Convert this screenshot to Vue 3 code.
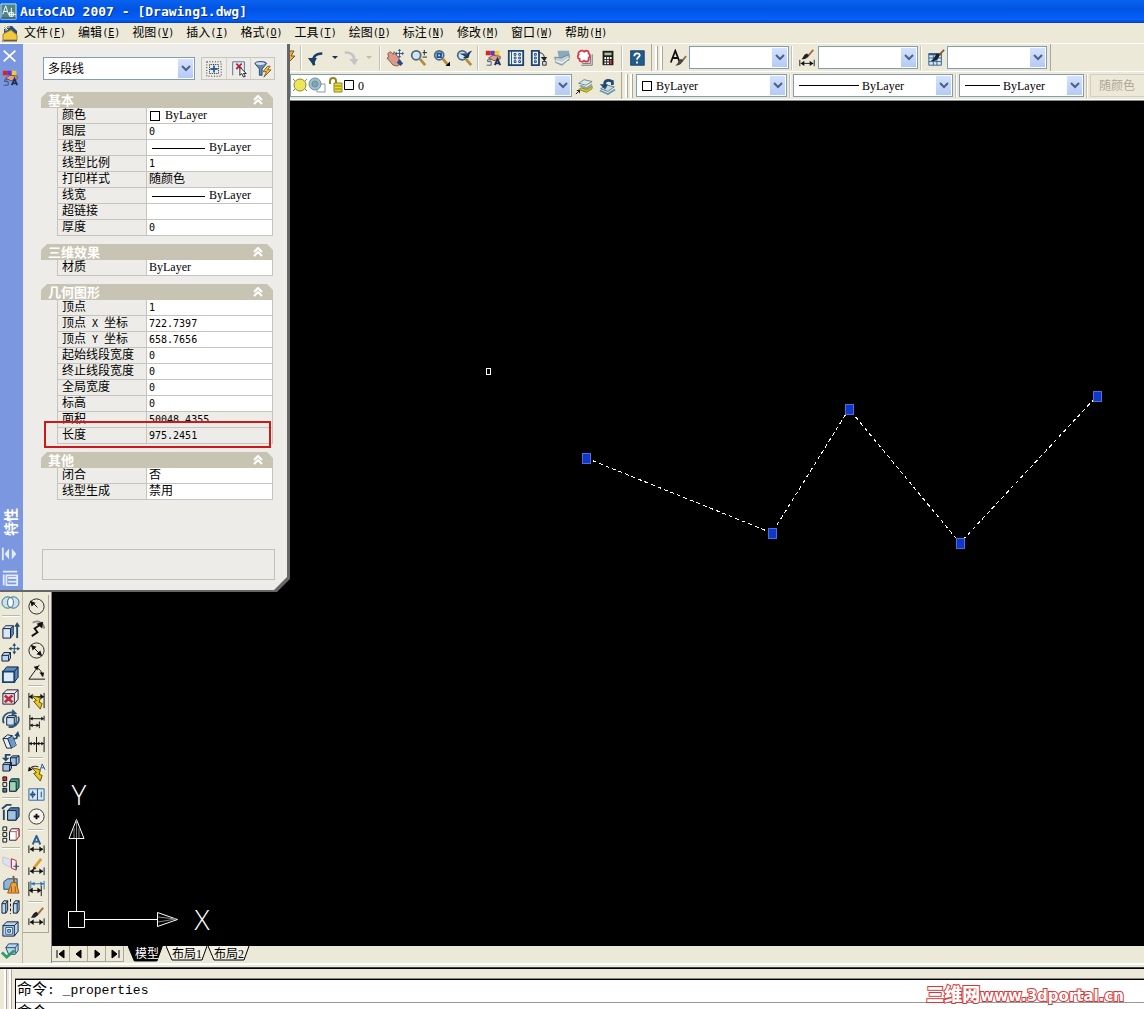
<script setup>
const menus = [
  ['文件', 'F'], ['编辑', 'E'], ['视图', 'V'], ['插入', 'I'], ['格式', 'O'], ['工具', 'T'],
  ['绘图', 'D'], ['标注', 'N'], ['修改', 'M'], ['窗口', 'W'], ['帮助', 'H'],
]

const lens = '<circle cx="8" cy="7" r="5" fill="#cfe6f5" stroke="#51697e" stroke-width="2"/><path d="M12 11l6 7" stroke="#b58a3c" stroke-width="3"/>'
const cube = '<path d="M2 7l4-4h12v10l-4 5H2z" fill="#b9d7f0" stroke="#111c33"/><path d="M2 7h12v11M14 7l4-4" fill="none" stroke="#111c33"/>'
const hdim = '<path d="M2 11v8M18 11v8M3 15h14" stroke="#111" fill="none"/><path d="M3 15l4-3v6zM17 15l-4-3v6z" fill="#111"/>'
const bolt = '<path d="M5 5l9 2-1 5 3 1-2 6-7-8 3-1z" fill="#e8c818" stroke="#5c4d10"/>'
const brush = '<path d="M17 1l-7 8" stroke="#a3683a" stroke-width="2"/><path d="M12 7c-2 4-5 5-8 4 2-1 2-5 6-6z" fill="#222"/>'
const props = '<path d="M2 2h5v5H2z" fill="#d22"/><path d="M7 2h5v5H7z" fill="#63c"/><path d="M12 2h5v5h-5z" fill="#e8d02c"/><path d="M5 10l5-3 8 1v3l-7 2z" fill="#dba58b" stroke="#844"/><path d="M12 18l3-7 3 7M13 16h4" fill="none" stroke="#1d315c" stroke-width="2"/><path d="M8 12H4v2h4v4H3" fill="none" stroke="#357" />'

const icons = {
  bolt: '<path d="M8 3L3 11h4l-4 7 10-10H9l3-5z" fill="#f2b63c" stroke="#6d5520"/>',
  undo: '<path d="M8 18c-3-7 0-13 9-13" fill="none" stroke="#1c3f63" stroke-width="3"/><path d="M1 10h10l-4 8z" fill="#1c3f63"/>',
  redo: '<path d="M2 4c8-1 11 4 10 9" fill="none" stroke="#c3c5c4" stroke-width="3"/><path d="M7 11h10l-4 7z" fill="#c3c5c4"/>',
  pan: '<path d="M2 5l3-2 3 3 1-3 5 7 2 6-3 3-5-1-7-8 2-1z" fill="#d99a8c" stroke="#8a5348"/><path d="M12 15l4 4 3-3-4-5z" fill="#2b4c83"/><path d="M15 1v8M11 5h8" stroke="#2b5487" stroke-width="1"/><path d="M15 0l-2 2h4zM15 10l-2-2h4zM10 5l2-2v4zM20 5l-2-2v4z" fill="#2b5487"/>',
  zoom: lens + '<path d="M15 4h5M17 1v6M15 9h5" stroke="#222" fill="none"/>',
  zoomwin: lens + '<path d="M6 5h4v4H6z" fill="none" stroke="#1c4c94" stroke-width="2"/><path d="M20 14v5h-5z" fill="#000"/>',
  zoomprev: lens + '<path d="M5 5h7v3c2-4 3-5 7-6-3 3-3 5-4 8H9l2-2z" fill="#17385f"/>',
  props,
  center: '<path d="M2 2h16v16H2z" fill="#e6f1fa" stroke="#1c4370" stroke-width="2"/><path d="M5 2v16" stroke="#1c4370"/><path d="M8 5h2v2H8zM13 5h2v2h-2zM8 9h2v2H8zM13 9h2v2h-2zM8 13h2v2H8zM13 13h2v2h-2z" fill="none" stroke="#1c4370"/>',
  palettes: '<path d="M2 2h8v16H2z" fill="#e6f1fa" stroke="#1c4370" stroke-width="2"/><path d="M5 5h2v2H5zM5 9h2v2H5zM5 13h2v2H5z" fill="none" stroke="#1c4370"/><path d="M9 4c5 0 7 2 7 7" fill="none" stroke="#222"/><path d="M12 9l4 5 3-5z" fill="#222"/><path d="M14 14h4v4h-4z" fill="#dfe6ee" stroke="#222"/>',
  sheets: '<path d="M5 2h13v11H7z" fill="#89a9bd"/><path d="M2 9l7 1 9-4v5l-8 7-7-3z" fill="#bed0d6" stroke="#71828b"/><path d="M2 13l8 2 8-5" stroke="#fff" fill="none"/>',
  markup: '<path d="M6 18h12V6M7 16h9V8" fill="none" stroke="#667" /><path d="M4 3c2-2 4-1 5 0 2-2 6-1 5 2 3 2 1 4 0 5 1 4-3 5-5 3-2 2-6 1-5-2-3-1-2-4-1-5-1-1 0-3 1-3z" fill="#fff" stroke="#d23c52" stroke-width="2"/>',
  calc: '<path d="M4 2h12v16H4z" fill="#1b1b1b"/><path d="M6 4h8v3H6z" fill="#a9bd96"/><path d="M6 9h2v2H6zM9 9h2v2H9zM12 9h2v2h-2zM6 12h2v2H6zM9 12h2v2H9zM6 15h2v2H6zM9 15h2v2H9z" fill="#fff"/><path d="M12 12h2v5h-2z" fill="#c44"/>',
  help: '<rect x="3" y="2" width="15" height="16" fill="#1f5b8c" stroke="#154066"/><path d="M7 8c0-4 6-4 6-1 0 2-3 2-3 5M10 14v2" fill="none" stroke="#fff" stroke-width="2"/>',
  textstyle: '<path d="M2 15L7 2l5 13M4 10h6" fill="none" stroke="#111" stroke-width="2"/><path d="M19 8l-5 6" stroke="#9b6a3b" stroke-width="2"/><path d="M16 12c-2 5-5 7-9 6 3-1 3-5 6-7z" fill="#444"/>',
  dimstyle: brush + '<path d="M2 12v7M18 12v7M3 16h14" stroke="#111"/><path d="M3 16l4-3v6zM17 16l-4-3v6z" fill="#111"/>',
  tablestyle: '<path d="M2 5h14v13H2z" fill="#d7e8f5" stroke="#2c5c8e"/><path d="M2 6h14" stroke="#2c5c8e" stroke-width="2"/><path d="M2 10h14M2 14h14M7 7v11M11 7v11" stroke="#2c5c8e"/><path d="M19 1l-8 8" stroke="#8c5430" stroke-width="2"/><path d="M14 6c-1 6-5 8-10 7 4-1 4-5 7-8z" fill="#222"/>',
  layerprev: '<path d="M4 7l6-4 9 2-7 4z" fill="#dbe9ec" stroke="#6b8189"/><path d="M4 10l3-1 6 2 6-4v2l-6 5z" fill="#7ca8bd"/><path d="M4 14l3-2 6 2 6-4v3l-6 4z" fill="#d8c528" stroke="#8b7f1e"/><path d="M1 19l4-4M2 15h3v3" fill="none" stroke="#111"/>',
  layerback: '<path d="M3 13l7-4 8 2-7 5z" fill="#c4d9de" stroke="#54788e"/><path d="M2 15l9 4 8-5" fill="none" stroke="#6c99b4" stroke-width="2"/><path d="M8 11C6 5 9 2 16 5v4" fill="none" stroke="#1d4a73" stroke-width="3"/><path d="M2 8h9l-3 6z" fill="#1d4a73"/>',
  qselect: '<path d="M2 2h16v16H2z" fill="none" stroke="#111" stroke-dasharray="1 2"/><path d="M5 5h10v10H5z" fill="none" stroke="#111" stroke-dasharray="1 1"/><path d="M10 6v8M6 10h8" stroke="#275e9c" stroke-width="2"/>',
  pick: '<path d="M3 17V2h13v12" fill="none" stroke="#456b95"/><path d="M7 4l6 6M13 4l-6 6" stroke="#b5244a" stroke-width="2"/><path d="M11 8v9l2-2 2 4 2-1-2-3h3z" fill="#fff" stroke="#111"/>',
  filter: '<path d="M1 4c0-3 13-3 13 0l-5 6v7H6v-7z" fill="#6288ae" stroke="#27456b"/><ellipse cx="7" cy="4" rx="5" ry="1.500" fill="#d6e4f2"/><path d="M15 7l-5 6h4l-3 6 8-8h-4l3-4z" fill="#f6c443" stroke="#7c5a1a"/>',
  union: '<circle cx="7" cy="10" r="6" fill="#c8e2ee" stroke="#376784" stroke-width="1"/><circle cx="13" cy="10" r="6" fill="#c8e2ee" stroke="#376784"/><ellipse cx="10" cy="10" rx="3" ry="5" fill="#fff" stroke="#376784"/>',
  extrude: '<path d="M2 8l3-3h8v9l-3 4H2z" fill="#d6e9f7" stroke="#111c33"/><path d="M10 8l3-3v9l-3 4z" fill="#4c7eb1"/><path d="M2 8h8v10M10 8l3-3" fill="none" stroke="#111c33"/><path d="M17 18V4" stroke="#24486d" stroke-width="2"/><path d="M17 1l-3 5h6z" fill="#24486d"/>',
  moveface: '<path d="M1 13l2-3h7v6l-2 3H1z" fill="#b9d7f0" stroke="#111c33"/><path d="M1 13h7v6M8 13l2-3" fill="none" stroke="#111c33"/><path d="M14 1v10M9 6h10" stroke="#24486d"/><path d="M14 0l-2 3h4zM14 12l-2-3h4zM8 6l3-2v4zM20 6l-3-2v4z" fill="#24486d"/>',
  offset: '<path d="M2 7l4-5h12v11l-4 5z" fill="#5d8dbf" stroke="#111c33"/><path d="M14 7l4-5" stroke="#111c33"/><path d="M2 7h12v11H2z" fill="#dcebf7" stroke="#1c4370" stroke-width="2"/>',
  del: cube.replace('#b9d7f0', '#f4e9ea') + '<path d="M4 9l8 7M12 9l-8 7" stroke="#c5293e" stroke-width="3"/>',
  rotate: '<path d="M6 9l2-2h8v7l-2 3H6z" fill="#c6dff3" stroke="#111c33"/><path d="M6 9h8v8M14 9l2-2" fill="none" stroke="#111c33"/><path d="M3 15C0 8 6 2 14 4" fill="none" stroke="#2d587e" stroke-width="2"/><path d="M12 0l5 5-6 2z" fill="#2d587e"/><path d="M18 8c2 4 0 8-6 11H8" fill="none" stroke="#2d587e" stroke-width="2"/>',
  taper: '<path d="M2 8l5-4 5 1 4 10-5 3H6z" fill="#e4f0fa" stroke="#111c33"/><path d="M7 8l5-3 4 10-5 3z" fill="#6c9bc9"/><path d="M2 8h5l4 10M7 8l5-3" fill="none" stroke="#111c33"/><path d="M13 8c4 0 4 0 4-4" fill="none" stroke="#24486d" stroke-width="2"/><path d="M14 5l4-5 2 6z" fill="#24486d"/>',
  copyface: '<path d="M10 5l2-2h7v7l-3 3h-6zM2 12l2-2h7v6l-2 3H2z" fill="#9cc3e6" stroke="#111c33" stroke-width="1"/><path d="M10 5h6v8H10M16 5l3-2M2 12h7v7M9 12l2-2" fill="none" stroke="#111c33"/><path d="M10 2H5v5" fill="none" stroke="#24486d" stroke-width="2"/><path d="M1 5h8L5 9z" fill="#24486d"/>',
  colorface: '<path d="M2 2h4v4H2z" fill="#d33" stroke="#111"/><path d="M2 8h4v4H2z" fill="#eee" stroke="#111"/><path d="M2 14h4v4H2z" fill="#38a" stroke="#111"/><path d="M9 7l2-3h8v9l-3 4H9z" fill="#4a9c78" stroke="#111c33"/><path d="M9 7h7v10H9z" fill="#9fd6b7" stroke="#111c33"/>',
  copyedge: '<path d="M7 8l3-3h9v9l-3 4H7z" fill="#4c7eb1" stroke="#111c33" stroke-width="1"/><path d="M7 8h9v10H7z" fill="#9cc3e6" stroke="#111c33"/><path d="M3 18V7M1 6l5-4h5" fill="none" stroke="#24486d" stroke-width="2"/>',
  coloredge: '<path d="M2 2h4v4H2zM2 8h4v4H2zM2 14h4v4H2z" fill="#eee" stroke="#111"/><path d="M9 7l2-3h8v8l-3 4H9z" fill="#fff" stroke="#111c33"/><path d="M9 7h7v9M16 7l3-3v8l-3 4" fill="none" stroke="#c44"/>',
  imprint: '<path d="M2 4l8 3v8l-8-4z" fill="#dce1f0" stroke="#c5c5d5"/><path d="M11 6v10l5 2V8z" fill="#fbeef1" stroke="#c22447"/><path d="M16 11v6M13 14h6" stroke="#246"/>',
  clean: '<path d="M3 7l4-3h10v11H3z" fill="#8db6da" stroke="#24486d"/><path d="M13 1l1 7" stroke="#8b5a29" stroke-width="2"/><path d="M11 8h5l3 11H7z" fill="#f2a03a" stroke="#91581b"/><path d="M11 12v6M15 12v6" stroke="#91581b"/>',
  separate: '<path d="M1 7l2-3h4v10l-2 3H1zM13 7l2-3h4v10l-2 3h-4z" fill="#b9d7f0" stroke="#111c33"/><path d="M1 7h4v10M5 7l2-3M13 7h4v10M17 7l2-3" fill="none" stroke="#111c33"/><path d="M10 2v16" stroke="#111" stroke-dasharray="3 2"/>',
  shell: cube + '<path d="M5 9h7v7H5z" fill="#fff" stroke="#285a88"/><path d="M7 11h3v3H7z" fill="#8cb9e1" stroke="#285a88"/>',
  check: '<path d="M5 7l3-4h10v7l-3 4H8z" fill="#b9d7f0" stroke="#24486d"/><path d="M5 7h10v6M15 7l3-4" fill="none" stroke="#24486d"/><path d="M1 12l5 5 8-7" fill="none" stroke="#2c9c6a" stroke-width="3"/>',
  radius: '<circle cx="10" cy="10" r="8" fill="none" stroke="#222"/><path d="M11 11L4 4" stroke="#111"/><path d="M3 4l6 2-4 4z" fill="#111"/>',
  jogged: '<path d="M6 4c6-4 12 1 12 6" fill="none" stroke="#888" stroke-width="2"/><path d="M5 18l6-4-3-4 6-4" fill="none" stroke="#111" stroke-width="2"/><path d="M17 3l-1 7-6-5z" fill="#111"/>',
  diameter: '<circle cx="10" cy="10" r="8" fill="none" stroke="#222"/><path d="M5 5l10 10" stroke="#111"/><path d="M4 4l6 2-4 4zM16 16l-6-2 4-4z" fill="#111"/>',
  angular: '<path d="M13 2L2 17h17M8 5c5 0 8 4 8 9" fill="none" stroke="#111"/><path d="M7 4l5-1-1 5zM13 10h5l-1 5z" fill="#111"/>',
  quick: '<path d="M2 2v16M18 2v16M2 6h16" stroke="#111"/><path d="M2 6l4-3v6zM18 6l-4-3v6z" fill="#111"/>' + bolt,
  baseline: '<path d="M3 2v16M13 9v7M18 3v5M3 6h13M3 13h9" stroke="#111"/><path d="M3 6l3-2v4zM18 6l-3-2v4zM3 13l3-2v4zM13 13l-3-2v4z" fill="#111"/>',
  cont: '<path d="M2 2v16M10 2v16M18 2v16M2 9h16" stroke="#111"/><path d="M2 9l3-2v4zM10 9l-3-2v4zM10 9l3-2v4zM18 9l-3-2v4z" fill="#111"/>',
  leader: bolt + '<path d="M2 8c2-5 6-5 10-4" fill="none" stroke="#111"/><path d="M1 9l1-5 4 3z" fill="#111"/><path d="M14 7l2-6 3 6M15 5h3" stroke="#245c94" fill="none"/>',
  tolerance: '<path d="M2 4h16v12H2z" fill="#d7e8f5" stroke="#2c6599" stroke-width="1"/><path d="M11 4v12M6 6v8M3 10h6M15 7v6M13 12h0" stroke="#1b4a7a"/><circle cx="6" cy="10" r="2" fill="none" stroke="#1b4a7a"/>',
  centermark: '<circle cx="10" cy="10" r="8" fill="#f6f4ea" stroke="#333"/><path d="M10 7v6M7 10h6" stroke="#111" stroke-width="2"/>',
  dimtext: hdim + '<path d="M6 10l4-9 4 9M8 7h5" fill="none" stroke="#275e96" stroke-width="2"/>',
  dimedit: hdim + '<path d="M15 2L7 12" stroke="#db9c34" stroke-width="3"/><path d="M6 14l1-4 3 2z" fill="#222"/>',
  dimupdate: '<path d="M4 2v9M18 2v9M4 5h14" stroke="#2f76ae"/><path d="M4 5l4-2v4zM18 5l-4-2v4z" fill="#2f76ae"/><path d="M15 7v11M2 12h13M2 3v15" stroke="#111"/><path d="M2 12l4-3v6zM15 12l-4-3v6z" fill="#111"/>',
}

const standardTools = [
  { t: 'sep' }, { t: 'icon', i: 'undo', n: '放弃' }, { t: 'drop', n: '放弃列表' },
  { t: 'icon', i: 'redo', n: '重做' }, { t: 'drop', n: '重做列表', off: true }, { t: 'sep' },
  { t: 'icon', i: 'pan', n: '平移' }, { t: 'icon', i: 'zoom', n: '实时缩放' },
  { t: 'icon', i: 'zoomwin', n: '窗口缩放' }, { t: 'icon', i: 'zoomprev', n: '缩放上一个' }, { t: 'sep' },
  { t: 'icon', i: 'props', n: '特性' }, { t: 'icon', i: 'center', n: '设计中心' },
  { t: 'icon', i: 'palettes', n: '工具选项板' }, { t: 'icon', i: 'sheets', n: '图纸集' },
  { t: 'icon', i: 'markup', n: '标记集' }, { t: 'icon', i: 'calc', n: '计算器' }, { t: 'sep' },
  { t: 'icon', i: 'help', n: '帮助' },
]
const styleTools = [
  { i: 'textstyle', n: '文字样式' }, { i: 'dimstyle', n: '标注样式' }, { i: 'tablestyle', n: '表格样式' },
]
const solidTools = ['union', '', 'extrude', 'moveface', 'offset', 'del', 'rotate', 'taper', 'copyface', 'colorface', '',
  'copyedge', 'coloredge', '', 'imprint', 'clean', 'separate', 'shell', 'check']
const dimTools = ['radius', 'jogged', 'diameter', 'angular', '', 'quick', 'baseline', 'cont', '', 'leader', 'tolerance',
  'centermark', '', 'dimtext', 'dimedit', 'dimupdate', '', 'dimstyle']

const sections = [
  { title: '基本', rows: [
    { k: '颜色', v: 'ByLayer', swatch: true }, { k: '图层', v: '0' }, { k: '线型', v: 'ByLayer', line: true },
    { k: '线型比例', v: '1' }, { k: '打印样式', v: '随颜色', ro: true }, { k: '线宽', v: 'ByLayer', line: true },
    { k: '超链接', v: '' }, { k: '厚度', v: '0' },
  ] },
  { title: '三维效果', rows: [{ k: '材质', v: 'ByLayer' }] },
  { title: '几何图形', marked: true, rows: [
    { k: '顶点', v: '1' }, { k: '顶点 X 坐标', v: '722.7397' }, { k: '顶点 Y 坐标', v: '658.7656' },
    { k: '起始线段宽度', v: '0' }, { k: '终止线段宽度', v: '0' }, { k: '全局宽度', v: '0' }, { k: '标高', v: '0' },
    { k: '面积', v: '50048.4355', ro: true }, { k: '长度', v: '975.2451', ro: true },
  ] },
  { title: '其他', rows: [{ k: '闭合', v: '否' }, { k: '线型生成', v: '禁用' }] },
]

const vertices = [[534, 357], [720, 432], [797, 308], [908, 442], [1045, 295]]
const points = vertices.map((p) => p.join(',')).join(' ')
const navs = [
  ['第一个', 'M3 3v8M10 3v8L5 7z'], ['上一个', 'M9 3v8L4 7z'], ['下一个', 'M5 3v8l5-4z'], ['最后一个', 'M4 3v8l5-4zM11 3v8'],
]
</script>

<template>
  <div class="app">
    <header class="title">
      <svg class="logo" viewBox="0 0 18 20"><path d="M1 2h16v16H1z" fill="#4f8489" stroke="#d9efe9" /><path d="M3 13L6 4l3 9M4 10h4M12 6v10M9 13h8M10 11h4v4h-4z" fill="none" stroke="#fff" /><path d="M1 17h16" stroke="#245" /></svg>
      <h1>AutoCAD 2007 - [Drawing1.dwg]</h1>
    </header>

    <nav class="menu">
      <svg class="doc" viewBox="0 0 18 20"><path d="M4 3h8l5 5v10H4z" fill="#294d7c" /><path d="M3 17V11l8-4 6 5v5z" fill="#f3c83b" stroke="#a58422" /><path d="M6 1v7M2 4h8M3 2l5 5M8 2L3 7" stroke="#f8f2bd" /><path d="M2 18h15" stroke="#555" /></svg>
      <button v-for="m in menus" :key="m[1]" type="button">{{ m[0] }}<span class="mono">(<u>{{ m[1] }}</u>)</span></button>
    </nav>

    <div class="bars">
      <div class="bar">
        <div class="group">
          <span class="peek"><svg viewBox="0 0 20 20" v-html="icons.bolt"></svg></span>
          <template v-for="(b, n) in standardTools" :key="n">
            <i v-if="b.t === 'sep'" class="sep"></i>
            <button v-else-if="b.t === 'icon'" type="button" class="tool" :class="b.i" :aria-label="b.n"><svg viewBox="0 0 20 20" v-html="icons[b.i]"></svg></button>
            <button v-else type="button" class="drop" :class="{ off: b.off }" :aria-label="b.n"></button>
          </template>
        </div>
        <div class="group">
          <i class="grip"></i>
          <template v-for="(s, n) in styleTools" :key="s.i">
            <i v-if="n" class="sep"></i>
            <button type="button" class="tool" :aria-label="s.n"><svg viewBox="0 0 20 20" v-html="icons[s.i]"></svg></button>
            <span class="combo style"><select :aria-label="s.n"><option></option></select></span>
          </template>
        </div>
      </div>
      <div class="bar">
        <div class="group">
          <span class="combo layer">
            <select aria-label="图层"><option>0</option></select>
            <svg class="deco" viewBox="0 0 66 20">
              <circle cx="9" cy="9" r="6" fill="#eee65a" stroke="#8d8a2c" /><path d="M2 15l2-2M16 15l-2-2M2 3l2 2M16 3l-2 2" stroke="#8d8a2c" />
              <path d="M26 8h8v8h-8z" fill="#fff" stroke="#89a" /><circle cx="24" cy="8" r="6" fill="#9fbfca" stroke="#6f909d" /><circle cx="24" cy="8" r="3" fill="#7fa5b2" stroke="#6f909d" />
              <path d="M39 8V5c0-4 6-4 6 0v3" fill="none" stroke="#8c861f" stroke-width="2" /><path d="M43 7h8v9h-8z" fill="#e6dc3a" stroke="#8c861f" /><path d="M44 10h6M44 13h6" stroke="#8c861f" />
              <path d="M53.500 4.500h9v9h-9z" fill="#fff" stroke="#000" />
            </svg>
          </span>
          <button type="button" class="tool" aria-label="图层状态"><svg viewBox="0 0 20 20" v-html="icons.layerprev"></svg></button>
          <button type="button" class="tool" aria-label="上一个图层"><svg viewBox="0 0 20 20" v-html="icons.layerback"></svg></button>
        </div>
        <div class="group grow">
          <i class="grip"></i>
          <span class="combo color"><select aria-label="颜色"><option>ByLayer</option></select><i class="deco swatch"></i></span>
          <i class="sep"></i>
          <span class="combo ltype"><select aria-label="线型"><option>ByLayer</option></select><i class="deco rule"></i></span>
          <i class="sep"></i>
          <span class="combo weight"><select aria-label="线宽"><option>ByLayer</option></select><i class="deco rule"></i></span>
          <i class="sep"></i>
          <button type="button" class="plot" disabled>随颜色</button>
        </div>
      </div>
    </div>

    <main class="work">
      <aside class="dock solids">
        <template v-for="(t, n) in solidTools" :key="n">
          <button v-if="t" type="button" :aria-label="t"><svg viewBox="0 0 20 20" v-html="icons[t]"></svg></button>
          <i v-else></i>
        </template>
      </aside>
      <aside class="dock dims">
        <div class="rack">
          <template v-for="(t, n) in dimTools" :key="n">
            <button v-if="t" type="button" :aria-label="t"><svg viewBox="0 0 20 20" v-html="icons[t]"></svg></button>
            <i v-else></i>
          </template>
        </div>
      </aside>
      <section class="view">
        <div class="canvas">
          <svg class="drawing">
            <polyline :points="points" fill="none" stroke="#fff" stroke-dasharray="4 3" shape-rendering="crispEdges" />
            <rect v-for="(p, n) in vertices" :key="n" :x="p[0] - 4" :y="p[1] - 5" width="8" height="10" fill="#1037c9" stroke="#4b70d8" shape-rendering="crispEdges" />
            <rect x="434" y="267" width="4" height="6" fill="none" stroke="#fff" shape-rendering="crispEdges" />
          </svg>
          <svg class="ucs" viewBox="0 0 180 170">
            <g fill="none" stroke="#fff">
              <path d="M16.500 135.500h16v16h-16zM24.500 135V62.500M17 62.500h15l-7.500-19zM33 143.500h72M105.500 136.500v14l20-7z" />
              <path d="M24.500 44v18M22 52v10M27 52v10M106 141l18 2M106 146l18-3" stroke="#888" />
            </g>
            <text x="27" y="29">Y</text>
            <text x="150" y="154">X</text>
          </svg>
        </div>
        <div class="tabs">
          <button v-for="n in navs" :key="n[0]" type="button" class="nav" :aria-label="n[0]"><svg viewBox="0 0 14 14"><path :d="n[1]" stroke="#000" /></svg></button>
          <button type="button" class="tab on"><svg viewBox="0 0 42 16" preserveAspectRatio="none"><path d="M0 0l7 15h25l6-15" fill="#000" stroke="#000" /></svg><span>模型</span></button>
          <button type="button" class="tab"><svg viewBox="0 0 42 16" preserveAspectRatio="none"><path d="M0 0l6 14h30l5-14" fill="#f3f1e6" stroke="#000" /></svg><span>布局1</span></button>
          <button type="button" class="tab"><svg viewBox="0 0 42 16" preserveAspectRatio="none"><path d="M0 0l6 14h30l5-14" fill="#f3f1e6" stroke="#000" /></svg><span>布局2</span></button>
        </div>
      </section>
    </main>

    <footer class="command">
      <div class="history">
        <p>命令<span>: _properties</span></p>
        <label class="prompt">命令<span>:</span><input type="text" aria-label="命令行" /></label>
      </div>
      <a class="mark" href="#"><b>三维网</b>www.3dportal.cn</a>
    </footer>

    <aside class="palette">
      <div class="sheet">
        <div class="spine">
          <button type="button" aria-label="关闭"><svg viewBox="0 0 20 20"><path d="M3 4l13 12M16 4L3 16" stroke="#fff" stroke-width="2" /></svg></button>
          <svg viewBox="0 0 20 20" v-html="icons.props"></svg>
          <span class="name">特性</span>
          <button type="button" aria-label="自动隐藏"><svg viewBox="0 0 20 20"><path d="M2 3v14" stroke="#e4ecff" stroke-width="2" /><path d="M9 4v12l-5-6zM12 4v12l5-6z" fill="#e4ecff" /></svg></button>
          <button type="button" aria-label="菜单"><svg viewBox="0 0 20 20"><path d="M2 3h16M3 6v12M6 7h12v11H6zM8 10h9M8 14h9" fill="none" stroke="#e4ecff" stroke-width="2" /></svg></button>
        </div>
        <div class="body">
          <div class="pick">
            <span class="combo"><select aria-label="对象类型"><option>多段线</option></select></span>
            <div class="trio">
              <button v-for="q in ['qselect', 'pick', 'filter']" :key="q" type="button" :aria-label="q"><svg viewBox="0 0 20 20" v-html="icons[q]"></svg></button>
            </div>
          </div>
          <section v-for="s in sections" :key="s.title" class="sect">
            <h2>{{ s.title }}<svg viewBox="0 0 10 10"><path d="M1 5l4-4 4 4M1 9l4-4 4 4" fill="none" stroke="#fff" stroke-width="2" /></svg></h2>
            <table>
              <tbody>
                <tr v-for="r in s.rows" :key="r.k" :class="{ ro: r.ro }">
                  <th scope="row"><template v-for="(w, n) in r.k.split(' ')" :key="n"><span :class="{ mono: n === 1 }">{{ n === 1 ? '\u00a0' + w + '\u00a0' : w }}</span></template></th>
                  <td><i v-if="r.swatch" class="swatch"></i><i v-if="r.line" class="rule"></i><span :class="{ num: /^\d/.test(r.v) }">{{ r.v }}</span></td>
                </tr>
              </tbody>
            </table>
            <i v-if="s.marked" class="redbox"></i>
          </section>
          <div class="hint"></div>
        </div>
      </div>
    </aside>
  </div>
</template>

<style>
body {
  margin: 0;
  overflow: hidden;
}
</style>

<style scoped>
* {
  box-sizing: border-box;
}
.app {
  position: relative;
  display: flex;
  flex-direction: column;
  height: 100vh;
  background: #ece9d8;
  color: #000;
  font: 12px/16px "Liberation Serif", "Noto Sans CJK SC", serif;
}
button,
select,
input {
  margin: 0;
  padding: 0;
  border: 0;
  background: none;
  color: inherit;
  font: inherit;
}
svg {
  display: block;
}
.mono {
  font: 10px/16px "DejaVu Sans Mono", monospace;
}
.title {
  display: flex;
  align-items: center;
  flex: none;
  height: 23px;
  gap: 3px;
  background: linear-gradient(#0a63ee 0, #0054e3 40%, #0560fa 85%, #0242b8 100%);
}
.logo {
  width: 17px;
  height: 19px;
}
h1 {
  margin: 0;
  color: #fff;
  font: bold 13px/18px "DejaVu Sans Mono", monospace;
  text-shadow: 1px 1px #08308c;
}
.menu {
  display: flex;
  align-items: center;
  flex: none;
  height: 21px;
  gap: 12px;
  border-bottom: 1px solid #fff;
}
.doc {
  width: 18px;
  height: 20px;
  margin-right: -6px;
}
.menu button {
  display: flex;
  align-items: center;
  white-space: nowrap;
}
.bars {
  flex: none;
}
.bar {
  display: flex;
  height: 28px;
  padding-left: 290px;
  border-bottom: 1px solid #fff;
  overflow: hidden;
}
.group {
  display: flex;
  align-items: center;
  padding-right: 3px;
  border-right: 1px solid #aca899;
}
.grow {
  flex: 1;
  border: 0;
  padding: 0;
}
.peek {
  width: 8px;
  height: 20px;
  overflow: hidden;
}
.peek svg {
  width: 20px;
  height: 20px;
  margin-left: -8px;
}
.sep {
  flex: none;
  width: 6px;
  height: 24px;
  background: linear-gradient(90deg, transparent 2px, #c5c2b2 2px, #c5c2b2 3px, #fff 3px, #fff 4px, transparent 4px);
}
.grip {
  flex: none;
  width: 14px;
  height: 24px;
  background: linear-gradient(90deg, transparent 3px, #fff 3px, #fff 5px, #aca899 5px, #aca899 6px, transparent 6px, transparent 8px, #fff 8px, #fff 10px, #aca899 10px, #aca899 11px, transparent 11px);
}
.tool {
  display: flex;
  flex: none;
  align-items: center;
  justify-content: center;
  width: 23px;
  height: 24px;
}
.tool svg {
  flex: none;
  width: 18px;
  height: 18px;
}
.tool.redo {
  width: 18px;
}
.drop {
  display: flex;
  justify-content: center;
  width: 16px;
}
.drop::after {
  content: "";
  border: 3px solid transparent;
  border-top-color: #1c3150;
  border-bottom: 0;
}
.drop.off::after {
  border-top-color: #c0bdae;
}
.combo {
  position: relative;
  flex: none;
  display: block;
  height: 23px;
}
.combo select {
  display: block;
  width: 100%;
  height: 100%;
  padding: 0 20px 0 4px;
  appearance: none;
  border: 1px solid #7f9db9;
  border-radius: 0;
  background: #fff;
}
.combo::after {
  content: "";
  position: absolute;
  top: 2px;
  right: 2px;
  bottom: 2px;
  width: 15px;
  background: url("data:image/svg+xml,%3Csvg xmlns='http://www.w3.org/2000/svg' width='10' height='8'%3E%3Cpath d='M1 1l4 4 4-4' fill='none' stroke='%234d6185' stroke-width='2'/%3E%3C/svg%3E") center no-repeat, linear-gradient(#d5e2fd, #b4caf6);
  pointer-events: none;
}
.style {
  width: 100px;
}
.layer {
  width: 282px;
}
.layer select {
  padding-left: 67px;
}
.deco {
  position: absolute;
  top: 7px;
  left: 6px;
  pointer-events: none;
}
.layer .deco {
  top: 2px;
  left: 1px;
  width: 66px;
  height: 20px;
}
.swatch {
  width: 10px;
  height: 10px;
  border: 1px solid #000;
}
.color {
  width: 151px;
}
.color select {
  padding-left: 19px;
}
.rule {
  height: 1px;
  background: #000;
}
.combo .rule {
  top: 11px;
}
.ltype {
  width: 160px;
}
.ltype select {
  padding-left: 68px;
}
.ltype .rule {
  width: 60px;
}
.weight {
  width: 125px;
}
.weight select {
  padding-left: 43px;
}
.weight .rule {
  width: 35px;
}
.plot {
  flex: 1;
  height: 23px;
  padding-left: 8px;
  border: 1px solid #d2cfbf;
  border-right: 0;
  color: #aca899;
  text-align: left;
  white-space: nowrap;
}
.work {
  display: flex;
  flex: 1;
  min-height: 0;
}
.dock {
  flex: none;
  padding-top: 491px;
  overflow: hidden;
}
.dock button {
  display: flex;
  align-items: center;
  justify-content: center;
  width: 20px;
  height: 22px;
}
.dock svg {
  flex: none;
  width: 19px;
  height: 19px;
}
.dock i {
  display: block;
  height: 6px;
  margin: 0 2px;
  background: linear-gradient(transparent 2px, #bbb8a8 2px, #bbb8a8 3px, #fff 3px, #fff 4px, transparent 4px);
}
.solids {
  width: 23px;
  border-right: 1px solid #bbb8a8;
}
.dims {
  width: 28px;
  padding-top: 495px;
}
.rack {
  width: 26px;
  padding: 0 3px 5px 3px;
  border-right: 1px solid #aca899;
  border-bottom: 1px solid #aca899;
}
.view {
  display: flex;
  flex: 1;
  flex-direction: column;
  min-width: 0;
  border-top: 1px solid #888;
  border-left: 1px solid #888;
}
.canvas {
  position: relative;
  flex: 1;
  min-height: 0;
  overflow: hidden;
  background: #000;
}
.drawing {
  position: absolute;
  inset: 0;
  width: 100%;
  height: 100%;
}
.ucs {
  position: absolute;
  left: 0;
  bottom: 0;
  width: 180px;
  height: 170px;
}
.ucs text {
  fill: #fff;
  font: 300 28px/28px "Open Sans", sans-serif;
  text-anchor: middle;
}
.tabs {
  display: flex;
  flex: none;
  height: 17px;
}
.nav {
  width: 18px;
  height: 16px;
  border-right: 1px solid #aca899;
  border-bottom: 1px solid #aca899;
}
.nav svg {
  width: 14px;
  height: 14px;
  margin: 0 auto;
}
.tab {
  position: relative;
  width: 42px;
  height: 16px;
}
.nav + .tab {
  margin-left: 4px;
  width: 38px;
}
.tab svg {
  position: absolute;
  inset: 0;
  width: 100%;
  height: 100%;
}
.tab span {
  position: relative;
  display: block;
  line-height: 14px;
  white-space: nowrap;
}
.tab.on {
  color: #fff;
}
.command {
  position: relative;
  flex: none;
  height: 46px;
  padding: 16px 0 0 15px;
  overflow: hidden;
  background:
    linear-gradient(#fff 2px, #ece9d8 2px, #ece9d8 4px, #888 4px, #000 5px, #000 6px, transparent 6px),
    linear-gradient(90deg, transparent 4px, #fff 4px, #fff 6px, #aca899 6px, #aca899 7px, transparent 7px, transparent 9px, #fff 9px, #fff 11px, #aca899 11px, #aca899 12px, transparent 12px);
}
.history {
  height: 60px;
  border-top: 1px solid #000;
  border-left: 1px solid #000;
  background: #fff;
  box-shadow: 0 -1px #888;
}
.history p,
.prompt {
  display: block;
  height: 22px;
  margin: 0;
  padding-left: 1px;
  font: 15px/16px "Noto Sans CJK SC", sans-serif;
}
.history span {
  font: 13px/16px "Liberation Mono", monospace;
}
.prompt {
  border-top: 1px solid #999;
}
.prompt input {
  width: 400px;
}
.mark {
  position: absolute;
  right: 20px;
  bottom: 3px;
  color: #fff;
  font: bold 15px/20px "DejaVu Sans", "Noto Sans CJK SC", sans-serif;
  text-decoration: none;
  white-space: nowrap;
  -webkit-text-stroke: 2px #d93636;
  paint-order: stroke fill;
}
.mark b {
  font-size: 18px;
  line-height: 20px;
}
.palette {
  position: absolute;
  top: 44px;
  left: 0;
  width: 290px;
  height: 548px;
  padding: 0 3px 2px 0;
  background: #666;
  clip-path: polygon(0 0, 100% 0, 100% calc(100% - 13px), calc(100% - 13px) 100%, 0 100%);
}
.sheet {
  display: flex;
  height: 100%;
  background: #edece8;
  clip-path: polygon(0 0, 100% 0, 100% calc(100% - 13px), calc(100% - 13px) 100%, 0 100%);
}
.spine {
  display: flex;
  flex: none;
  flex-direction: column;
  align-items: center;
  width: 23px;
  padding-right: 4px;
  background: #7b97df;
}
.spine svg {
  width: 18px;
  height: 20px;
}
.spine button {
  height: 24px;
}
.name {
  margin: auto 0 6px;
  color: #fff;
  font: bold 14px/20px "Noto Sans CJK SC", sans-serif;
  writing-mode: vertical-rl;
  text-orientation: sideways;
  transform: rotate(180deg);
}
.body {
  flex: 1;
  padding: 13px 14px 0 18px;
}
.pick {
  display: flex;
  gap: 6px;
  height: 23px;
  margin: 0 -2px 12px 2px;
}
.pick .combo {
  flex: 1;
}
.trio {
  display: flex;
  border: 1px solid #c9c6b8;
}
.trio button {
  display: flex;
  align-items: center;
  justify-content: center;
  width: 24px;
}
.trio button + button {
  border-left: 1px solid #d6d3c6;
}
.trio svg {
  width: 18px;
  height: 18px;
}
.sect {
  position: relative;
  margin-bottom: 8px;
}
h2 {
  display: flex;
  align-items: center;
  justify-content: space-between;
  height: 16px;
  margin: 0;
  padding: 0 10px 0 7px;
  background: #c8c4b3;
  color: #fff;
  font: bold 13px/16px "Noto Sans CJK SC", sans-serif;
  clip-path: polygon(6px 0, calc(100% - 6px) 0, 100% 6px, 100% 100%, 0 100%, 0 6px);
}
h2 svg {
  width: 10px;
  height: 10px;
}
table {
  width: calc(100% - 16px);
  margin-left: 16px;
  border-collapse: separate;
  border-spacing: 0;
  border-left: 1px solid #c5c4be;
  table-layout: fixed;
}
tr {
  height: 16px;
}
th,
td {
  height: 16px;
  padding: 0;
  border-right: 1px solid #c5c4be;
  border-bottom: 1px solid #c5c4be;
  font-weight: normal;
  line-height: 15px;
  text-align: left;
  white-space: nowrap;
}
th {
  width: 89px;
  padding-left: 4px;
}
th .mono {
  line-height: 15px;
  vertical-align: top;
}
td {
  padding-left: 2px;
  background: #fff;
}
.ro td {
  background: #edece8;
}
.num {
  font: 10px/15px "DejaVu Sans Mono", monospace;
  vertical-align: top;
}
td .swatch {
  display: inline-block;
  margin: 0 5px 0 1px;
  vertical-align: middle;
}
td .rule {
  display: inline-block;
  width: 53px;
  margin: 0 4px 0 3px;
  vertical-align: middle;
}
.redbox {
  position: absolute;
  left: 3px;
  right: 2px;
  bottom: -4px;
  height: 27px;
  border: 2px solid #cc1a1a;
}
.hint {
  height: 31px;
  margin: 49px -2px 0 1px;
  border: 1px solid #c0bfb8;
}
</style>
